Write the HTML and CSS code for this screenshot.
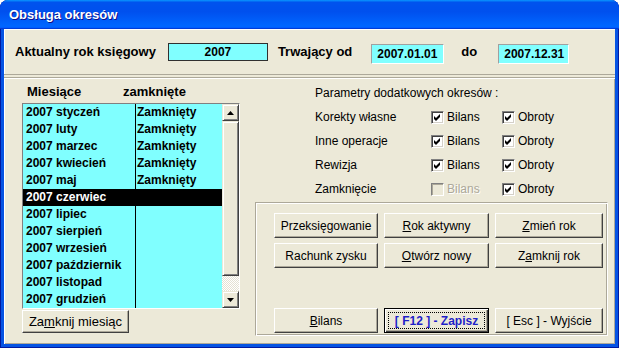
FILE: index.html
```html
<!DOCTYPE html>
<html lang="pl">
<head>
    <meta charset="UTF-8">
    <title>Obsługa okresów</title>
    <link rel="stylesheet" href="styles.css">
</head>
<body>
    <div class="window">
        <div class="titlebar">Obsługa okresów</div>
        <div class="client">
            <div class="top-panel">
                <span class="lbl lbl-year">Aktualny rok księgowy</span>
                <div class="year-box">2007</div>
                <span class="lbl lbl-from">Trwający od</span>
                <div class="date-box">2007.01.01</div>
                <span class="lbl lbl-to">do</span>
                <div class="date-box date-end">2007.12.31</div>
            </div>

            <div class="main">
                <div class="months">
                    <div class="months-head">
                        <span class="head-month">Miesiące</span>
                        <span>zamknięte</span>
                    </div>
                    <div class="list">
                        <div class="rows">
                            <div class="row"><span class="c1">2007 styczeń</span><span class="c2">Zamknięty</span></div>
                            <div class="row"><span class="c1">2007 luty</span><span class="c2">Zamknięty</span></div>
                            <div class="row"><span class="c1">2007 marzec</span><span class="c2">Zamknięty</span></div>
                            <div class="row"><span class="c1">2007 kwiecień</span><span class="c2">Zamknięty</span></div>
                            <div class="row"><span class="c1">2007 maj</span><span class="c2">Zamknięty</span></div>
                            <div class="row selected"><span class="c1">2007 czerwiec</span><span class="c2"></span></div>
                            <div class="row"><span class="c1">2007 lipiec</span><span class="c2"></span></div>
                            <div class="row"><span class="c1">2007 sierpień</span><span class="c2"></span></div>
                            <div class="row"><span class="c1">2007 wrzesień</span><span class="c2"></span></div>
                            <div class="row"><span class="c1">2007 październik</span><span class="c2"></span></div>
                            <div class="row"><span class="c1">2007 listopad</span><span class="c2"></span></div>
                            <div class="row"><span class="c1">2007 grudzień</span><span class="c2"></span></div>
                        </div>
                        <div class="scrollbar">
                            <div class="sb-btn">
                                <svg width="7" height="4" viewBox="0 0 7 4"><path d="M3.5 0 L7 4 L0 4 Z" fill="#000"/></svg>
                            </div>
                            <div class="sb-thumb"></div>
                            <div class="sb-track"></div>
                            <div class="sb-btn">
                                <svg width="7" height="4" viewBox="0 0 7 4"><path d="M0 0 L7 0 L3.5 4 Z" fill="#000"/></svg>
                            </div>
                        </div>
                    </div>
                    <button class="btn btn-month">Za<u>m</u>knij miesiąc</button>
                </div>

                <div class="params">
                    <div class="params-head">Parametry dodatkowych okresów :</div>
                    <div class="param-row">
                        <span class="param-name">Korekty własne</span>
                        <span class="chk-wrap chk-bilans"><span class="chk checked"></span>Bilans</span>
                        <span class="chk-wrap"><span class="chk checked"></span>Obroty</span>
                    </div>
                    <div class="param-row">
                        <span class="param-name">Inne operacje</span>
                        <span class="chk-wrap chk-bilans"><span class="chk checked"></span>Bilans</span>
                        <span class="chk-wrap"><span class="chk checked"></span>Obroty</span>
                    </div>
                    <div class="param-row">
                        <span class="param-name">Rewizja</span>
                        <span class="chk-wrap chk-bilans"><span class="chk checked"></span>Bilans</span>
                        <span class="chk-wrap"><span class="chk checked"></span>Obroty</span>
                    </div>
                    <div class="param-row">
                        <span class="param-name">Zamknięcie</span>
                        <span class="chk-wrap chk-bilans disabled"><span class="chk"></span>Bilans</span>
                        <span class="chk-wrap"><span class="chk checked"></span>Obroty</span>
                    </div>

                    <div class="actions">
                        <div class="btn-grid">
                            <button class="btn">Przeksięgowanie</button>
                            <button class="btn"><u>R</u>ok aktywny</button>
                            <button class="btn"><u>Z</u>mień rok</button>
                            <button class="btn">Rachunk zysku</button>
                            <button class="btn"><u>O</u>twórz nowy</button>
                            <button class="btn">Z<u>a</u>mknij rok</button>
                        </div>
                        <div class="btn-grid btn-bottom">
                            <button class="btn"><u>B</u>ilans</button>
                            <button class="btn btn-default"><span class="focus">[ F12 ] - Zapisz</span></button>
                            <button class="btn">[ Esc ] - Wyjście</button>
                        </div>
                    </div>
                </div>
            </div>
        </div>
    </div>
</body>
</html>
```

FILE: styles.css
```css
* {
    box-sizing: border-box;
}
body {
    margin: 0;
    background: #ffffff;
    font-family: "Liberation Sans", Arial, sans-serif;
    font-size: 12px;
    color: #000;
}
.window {
    width: 619px;
    height: 348px;
    display: flex;
    flex-direction: column;
    background: #0553e3;
    border-radius: 8px 8px 0 0;
    box-shadow: inset 1px 0 #0019a0, inset -1px 0 #0019a0, inset 0 -1px #0019a0;
}
.titlebar {
    height: 29px;
    padding: 0 9px;
    line-height: 29px;
    border-radius: 8px 8px 0 0;
    background: linear-gradient(180deg, #0997ff, #0053ee 8%, #0050ee 40%, #0066ff 88%, #0066ff 93%, #005bff 95%, #003dd7 96%, #003dd7);
    color: #fff;
    font-weight: bold;
    font-size: 13px;
    text-shadow: 1px 1px #0f1089;
}
.client {
    flex: 1;
    margin: 0 4px 4px;
    background: #ece9d8;
    display: flex;
    flex-direction: column;
}

/* top row */
.top-panel {
    height: 46px;
    display: flex;
    align-items: center;
    padding-left: 11px;
    border-bottom: 1px solid #aca899;
    box-shadow: inset 1px 1px #fff;
}
.lbl {
    font-weight: bold;
    font-size: 13px;
}
.year-box {
    width: 100px;
    height: 18px;
    margin-left: 12px;
    background: #80ffff;
    border: 1px solid #303030;
    text-align: center;
    font-weight: bold;
    line-height: 16px;
}
.lbl-from {
    margin-left: 10px;
}
.date-box {
    width: 73px;
    height: 20px;
    margin-left: 19px;
    margin-top: 5px;
    padding-left: 5px;
    background: #80ffff;
    border: 1px solid;
    border-color: #a0a0a0 #fff #fff #a0a0a0;
    font-weight: bold;
    line-height: 18px;
}
.lbl-to {
    margin-left: 17px;
}
.date-end {
    width: 71px;
    margin-left: 21px;
}

/* main area */
.main {
    flex: 1;
    display: flex;
    margin-top: 2px;
    border-top: 1px solid #aca899;
    box-shadow: inset 1px 1px #fff, inset -1px -1px #aca899;
}
.months {
    width: 236px;
    padding: 3px 0 0 18px;
}
.months-head {
    height: 20px;
    display: flex;
    align-items: center;
    font-weight: bold;
    font-size: 13px;
    padding-left: 5px;
}
.head-month {
    width: 96px;
}
.list {
    width: 218px;
    height: 206px;
    margin-top: 2px;
    display: flex;
    border: 1px solid;
    border-color: #808080 #fff #fff #808080;
}
.rows {
    flex: 1;
    background: #80ffff;
    background-image: linear-gradient(#000, #000);
    background-size: 1px 100%;
    background-position: 112px 0;
    background-repeat: no-repeat;
}
.row {
    height: 17px;
    display: flex;
    font-weight: bold;
    line-height: 17px;
}
.row .c1 {
    width: 113px;
    padding-left: 3px;
}
.row .c2 {
    flex: 1;
    padding-left: 1px;
}
.row.selected {
    background: #000;
    color: #fff;
}
.scrollbar {
    width: 17px;
    display: flex;
    flex-direction: column;
}
.sb-btn,
.sb-thumb {
    background: #ece9d8;
    border: 1px solid;
    border-color: #ece9d8 #404040 #404040 #ece9d8;
    box-shadow: inset 1px 1px #fff, inset -1px -1px #808080;
}
.sb-btn {
    height: 17px;
    display: flex;
    align-items: center;
    justify-content: center;
}
.sb-thumb {
    height: 155px;
}
.sb-track {
    flex: 1;
    background: repeating-conic-gradient(#fff 0 25%, #e4e1d3 0 50%) 0 0 / 2px 2px;
}

.btn {
    height: 25px;
    padding: 0;
    background: #ece9d8;
    border: 1px solid;
    border-color: #fff #404040 #404040 #fff;
    box-shadow: inset -1px -1px #aca899;
    font-family: "Liberation Sans", Arial, sans-serif;
    font-size: 12px;
    color: #000;
}
.btn-month {
    width: 107px;
    height: 23px;
    margin-top: 1px;
    font-size: 13px;
}

/* right side */
.params {
    flex: 1;
    display: flex;
    flex-direction: column;
    padding: 3px 7px 8px 15px;
}
.params-head {
    height: 24px;
    line-height: 24px;
    padding-left: 60px;
}
.param-row {
    height: 24px;
    display: flex;
    align-items: center;
    padding-left: 60px;
}
.param-name {
    width: 116px;
}
.chk-wrap {
    display: flex;
    align-items: center;
    gap: 3px;
}
.chk-bilans {
    width: 71px;
}
.chk {
    width: 13px;
    height: 13px;
    background: #fff;
    border: 1px solid;
    border-color: #808080 #fff #fff #808080;
    box-shadow: inset 1px 1px #404040, inset -1px -1px #d4d0c8;
}
.chk.checked {
    background: #fff url("data:image/svg+xml;utf8,<svg xmlns='http://www.w3.org/2000/svg' width='7' height='7'><path d='M0 2 L2 4 L6 0 L6 3 L2 7 L0 5 Z' fill='black'/></svg>") 2px 2px no-repeat;
}
.disabled {
    color: #aca899;
    text-shadow: 1px 1px #fff;
}
.disabled .chk {
    background: #ece9d8;
    box-shadow: inset 1px 1px #aca899;
}

.actions {
    flex: 1;
    margin-top: 1px;
    display: flex;
    flex-direction: column;
    padding: 10px 0 2px 18px;
    border: 1px solid;
    border-color: #aca899 #fff #fff #aca899;
    box-shadow: inset 1px 1px #fff, inset -1px -1px #aca899;
}
.btn-grid {
    display: grid;
    grid-template-columns: 104px 105px 108px;
    column-gap: 6px;
    row-gap: 5px;
}
.btn-bottom {
    margin-top: auto;
}
.btn-default {
    border: 1px solid #000;
    box-shadow: inset 1px 1px #fff, inset -1px -1px #404040, inset -2px -2px #aca899;
    padding: 3px;
}
.focus {
    display: flex;
    align-items: center;
    justify-content: center;
    height: 100%;
    outline: 1px dotted #000;
    outline-offset: -1px;
    color: #1f1fc8;
    font-weight: bold;
}
```
